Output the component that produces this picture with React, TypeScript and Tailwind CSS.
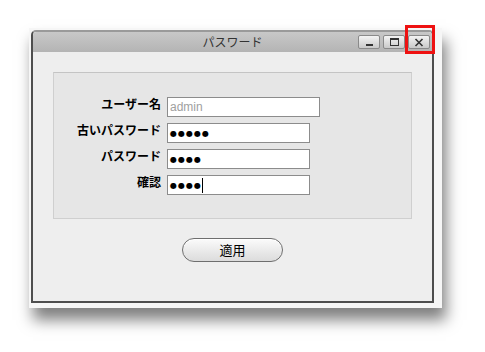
import React from "react";

const rows = [
  { label: "ユーザー名", value: "admin", kind: "user", width: "w-[153px]" },
  { label: "古いパスワード", value: "●●●●●", kind: "pass", width: "w-[143px]" },
  { label: "パスワード", value: "●●●●", kind: "pass", width: "w-[143px]" },
  { label: "確認", value: "●●●●", kind: "caret", width: "w-[143px]" },
];

const WinButton = ({ children, active }: { children: React.ReactNode; active?: boolean }) => (
  <div className="relative">
    <div className="flex h-[14px] w-[22px] items-center justify-center rounded-[2px] border border-[#8a8a8a] bg-gradient-to-b from-[#f4f4f4] to-[#c9c9c9]">
      {children}
    </div>
    {active && (
      <div className="absolute left-[-3px] top-[-10px] h-[29px] w-[30px] border-[3px] border-[#ee1111]" />
    )}
  </div>
);

const App = () => {
  return (
    <div
      className="h-[352px] w-[485px] overflow-hidden bg-white pl-[29px] pt-[28px]"
      style={{ fontFamily: '"Liberation Sans", "Noto Sans CJK JP", sans-serif' }}
    >
      <div className="w-[413px] bg-[#f6f6f6] pb-[5px] pl-[2px] pr-[8px] pt-[2px] shadow-[4px_12px_14px_rgba(0,0,0,0.5)]">
        <div className="flex h-[273px] w-[403px] flex-col rounded-t-[5px] border-2 border-t-[#9a9a9a] border-[#4e4e4e] bg-[#eeeeee]">
          {/* title bar */}
          <div className="relative flex h-[20px] items-center justify-center rounded-t-[4px] bg-gradient-to-b from-[#c8c8c8] to-[#b4b4b4]">
            <span className="text-[12px] text-[#333]" style={{ fontFamily: '"Noto Sans CJK JP", sans-serif' }}>
              パスワード
            </span>
            <div className="absolute right-[2px] top-[3px] flex gap-[3px]">
              <WinButton>
                <div className="mt-[5px] h-[2px] w-[7px] bg-[#333]" />
              </WinButton>
              <WinButton>
                <div className="h-[8px] w-[9px] border border-t-2 border-[#333]" />
              </WinButton>
              <WinButton active>
                <svg width="10" height="9" viewBox="0 0 10 9">
                  <path d="M1.5 1 L8.5 8 M8.5 1 L1.5 8" stroke="#333" strokeWidth="1.6" />
                </svg>
              </WinButton>
            </div>
          </div>

          {/* content */}
          <div className="flex flex-col items-center px-[20px] pt-[20px]">
            <div className="flex h-[147px] w-full flex-col gap-[6px] border border-[#cfcfcf] border-t-[#c4c4c4] bg-[#e6e6e6] pl-[23px] pt-[24px]">
              {rows.map((r) => (
                <div key={r.label} className="flex items-start gap-[6px]">
                  <div
                    className="w-[84px] text-right text-[12px] font-bold leading-[14px] text-black"
                    style={{ fontFamily: '"Noto Sans CJK JP", sans-serif' }}
                  >
                    {r.label}
                  </div>
                  <div
                    className={`flex h-[20px] ${r.width} items-center border border-[#8c8c8c] bg-white px-[2px]`}
                  >
                    {r.kind === "user" ? (
                      <span className="text-[12px] text-[#a0a0a0]">{r.value}</span>
                    ) : (
                      <>
                        <span
                          className="mt-[2px] text-[8px] font-bold leading-none tracking-[1px] text-black"
                          style={{ fontFamily: '"DejaVu Sans", sans-serif' }}
                        >
                          {r.value}
                        </span>
                        {r.kind === "caret" && <span className="h-[15px] w-[1px] bg-black" />}
                      </>
                    )}
                  </div>
                </div>
              ))}
            </div>

            <button
              className="mt-[19px] flex h-[24px] w-[101px] items-center justify-center rounded-full border border-[#6e6e6e] bg-gradient-to-b from-[#fbfbfb] via-[#ebebeb] to-[#dcdcdc] text-[13px] text-black shadow-[inset_0_1px_0_#fff]"
              style={{ fontFamily: '"Noto Sans CJK JP", sans-serif' }}
            >
              適用
            </button>
          </div>
        </div>
      </div>
    </div>
  );
};

export default App;
